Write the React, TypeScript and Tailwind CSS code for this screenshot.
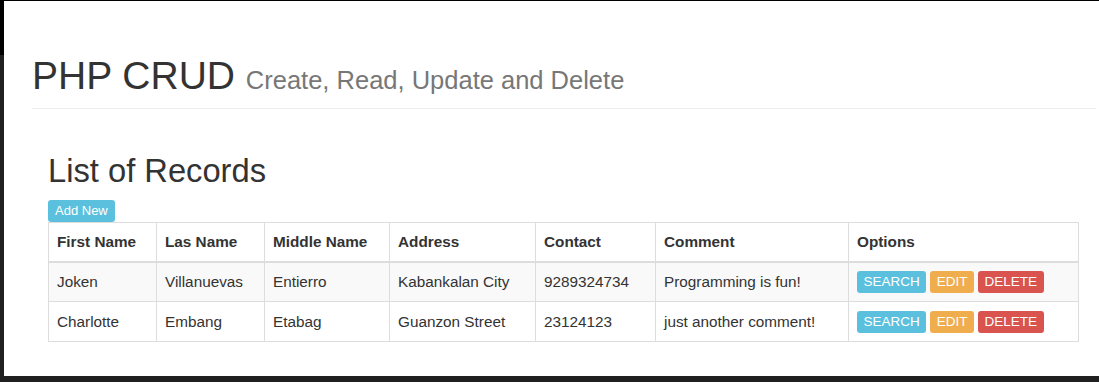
import React from "react";

const records = [
    { first: "Joken", last: "Villanuevas", middle: "Entierro", address: "Kabankalan City", contact: "9289324734", comment: "Programming is fun!" },
    { first: "Charlotte", last: "Embang", middle: "Etabag", address: "Guanzon Street", contact: "23124123", comment: "just another comment!" },
];

const cols = [
    { label: "First Name", w: "w-[108px]" },
    { label: "Las Name", w: "w-[108px]" },
    { label: "Middle Name", w: "w-[125px]" },
    { label: "Address", w: "w-[146px]" },
    { label: "Contact", w: "w-[120px]" },
    { label: "Comment", w: "w-[193px]" },
    { label: "Options", w: "w-[230px]" },
];

const Btn = ({ color, children }: { color: string, children: React.ReactNode }) => (
    <button className={`inline-block h-[22px] px-[6.5px] rounded-[3px] text-white text-[13.5px] leading-[22px] align-middle ${color}`}>{children}</button>
);

const App = () => {
    return <div className="w-[1099px] h-[382px] flex flex-col bg-[#202020] font-['Liberation_Sans',Arial,sans-serif] text-[#333]">
        <div className="h-px bg-black" />
        <div className="flex flex-1 min-h-0">
            <div className="w-[4px] flex flex-col">
                <div className="h-[54px] bg-black" />
                <div className="flex-1 bg-[#202020]" />
            </div>
            <div className="flex-1 bg-white">
                <div className="pl-[28px] pr-[3px]">
                    <div className="border-b border-[#eee] pt-[53px] pb-[11px]">
                        <h1 className="text-[39px] leading-[43px] font-normal">
                            PHP CRUD <small className="text-[25.5px] leading-none text-[#777]">Create, Read, Update and Delete</small>
                        </h1>
                    </div>
                </div>
                <div className="pl-[44px] pt-[44px]">
                    <h2 className="text-[32.7px] leading-[36px] font-normal">List of Records</h2>
                    <button className="mt-[11px] h-[22px] px-[7px] rounded-[3px] bg-[#5bc0de] text-white text-[13px] leading-[22px]">Add New</button>
                    <table className="table-fixed border-collapse w-[1030px] text-[15.3px]">
                        <colgroup>
                            {cols.map((c) => <col key={c.label} className={c.w} />)}
                        </colgroup>
                        <thead>
                            <tr>
                                {cols.map((c) => (
                                    <th key={c.label} className="border border-[#ddd] border-b-2 px-[8px] h-[39px] text-left font-bold leading-[22px]">{c.label}</th>
                                ))}
                            </tr>
                        </thead>
                        <tbody>
                            {records.map((r, i) => (
                                <tr key={r.first} className={i % 2 == 0 ? "bg-[#f9f9f9]" : ""}>
                                    <td className="border border-[#ddd] px-[8px] h-[40px] leading-[22px]">{r.first}</td>
                                    <td className="border border-[#ddd] px-[8px] leading-[22px]">{r.last}</td>
                                    <td className="border border-[#ddd] px-[8px] leading-[22px]">{r.middle}</td>
                                    <td className="border border-[#ddd] px-[8px] leading-[22px]">{r.address}</td>
                                    <td className="border border-[#ddd] px-[8px] leading-[22px]">{r.contact}</td>
                                    <td className="border border-[#ddd] px-[8px] leading-[22px]">{r.comment}</td>
                                    <td className="border border-[#ddd] px-[8px] leading-[22px]">
                                        <div className="flex gap-[4px]">
                                            <Btn color="bg-[#5bc0de]">SEARCH</Btn>
                                            <Btn color="bg-[#f0ad4e]">EDIT</Btn>
                                            <Btn color="bg-[#d9534f]">DELETE</Btn>
                                        </div>
                                    </td>
                                </tr>
                            ))}
                        </tbody>
                    </table>
                </div>
            </div>
        </div>
        <div className="h-[6px]" />
    </div>
}

export default App;
